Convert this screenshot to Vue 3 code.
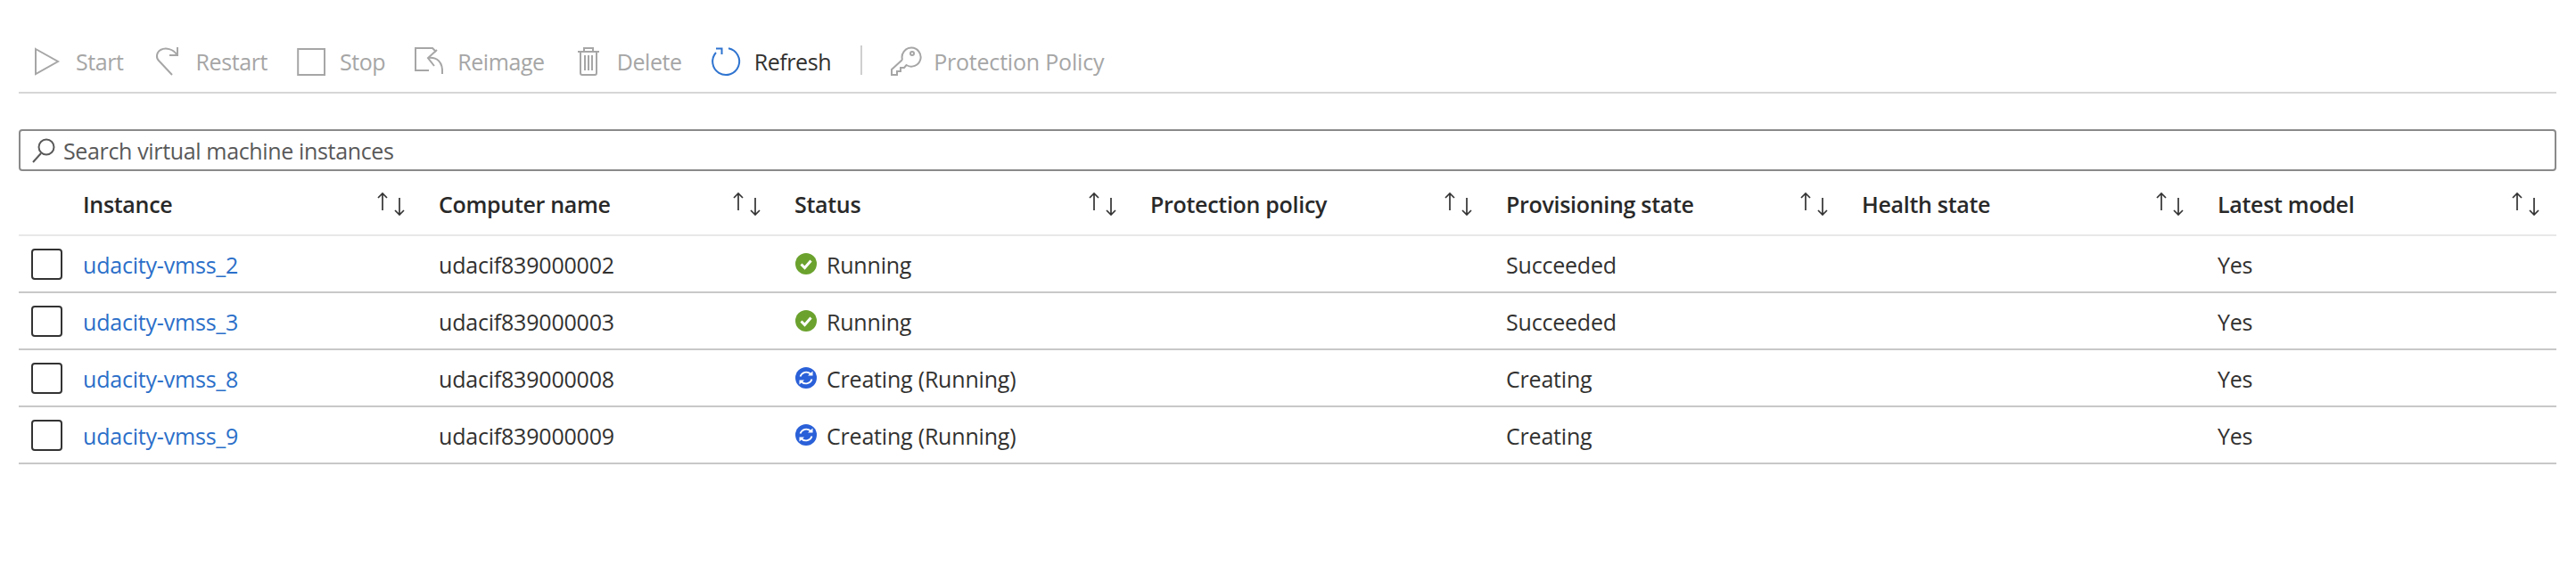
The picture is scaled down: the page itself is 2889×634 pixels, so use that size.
<template>
  <main class="page">
    <div class="toolbar">
      <button v-for="item in toolbarItems" :key="item.label" class="tool" :class="{ active: item.active, spaced: item.spaced }">
        <svg class="tool-icon" viewBox="0 0 32 32" fill="none" stroke="currentColor" stroke-width="2">
          <path v-for="d in item.paths" :key="d" :d="d" />
        </svg>
        <span>{{ item.label }}</span>
      </button>
    </div>

    <div class="search">
      <svg class="search-icon" viewBox="0 0 26 28" fill="none" stroke="#595959" stroke-width="2">
        <circle cx="16" cy="10" r="8.5" />
        <path d="M10 17 L1 27" />
      </svg>
      <span>Search virtual machine instances</span>
    </div>

    <div class="table">
      <div class="row head">
        <div></div>
        <div v-for="col in columns" :key="col" class="head-cell">
          <span>{{ col }}</span>
          <svg class="sort" viewBox="0 0 32 26" fill="none" stroke="#333" stroke-width="1.7">
            <path d="M6 20 V1 M1 6 L6 1 L11 6" />
            <path d="M25 6 V25 M20 20 L25 25 L30 20" />
          </svg>
        </div>
      </div>

      <div v-for="vm in instances" :key="vm.name" class="row">
        <div class="check-cell"><span class="checkbox"></span></div>
        <a class="cell link">{{ vm.name }}</a>
        <div class="cell">{{ vm.computer }}</div>
        <div class="status">
          <svg v-if="vm.creating" class="status-icon" viewBox="0 0 24 24">
            <circle cx="12" cy="12" r="12" fill="#2a60d8" />
            <path d="M5.5 10.5 A7 7 0 0 1 17 7.5 M18.5 13.5 A7 7 0 0 1 7 16.5" fill="none" stroke="#fff" stroke-width="1.8" />
            <path d="M14 9.5 H19.5 V4.5 Z M10 14.5 H4.5 V19.5 Z" fill="#fff" />
          </svg>
          <svg v-else class="status-icon" viewBox="0 0 24 24">
            <circle cx="12" cy="12" r="12" fill="#6ba22e" />
            <path d="M6.5 12.5 L10.5 16.5 L17.5 8.5" fill="none" stroke="#fff" stroke-width="3" />
          </svg>
          <span class="cell">{{ vm.status }}</span>
        </div>
        <div></div>
        <div class="cell">{{ vm.provisioning }}</div>
        <div></div>
        <div class="cell">Yes</div>
      </div>
    </div>
  </main>
</template>

<script setup>
const toolbarItems = [
  { label: 'Start', paths: ['M3 2 L28 16 L3 30 Z'] },
  { label: 'Restart', paths: ['M27 0 V9 H18', 'M26 8 C22 2 14 0 8 3 C3 6 3 12 6 15 L21 31'] },
  { label: 'Stop', paths: ['M1.2 2 H31 V31 H1.2 Z'] },
  { label: 'Reimage', paths: ['M16 26 H1 V1 H20 L24 5', 'M25 3 L15 12 L22 21', 'M15 12 C25 11 32 16 31 30'] },
  { label: 'Delete', paths: ['M4 5 H28', 'M7 5 V29 Q7 31 9 31 H23 Q25 31 25 29 V5', 'M11 5 V1 H21 V5', 'M12 9 V26', 'M16 9 V26', 'M20 9 V26'] },
  { label: 'Refresh', active: true, paths: ['M19 1.3 A15 15 0 1 1 5 6', 'M5 1.5 H11.5 V8'] },
  { label: 'Protection Policy', spaced: true, paths: ['M13 14 L1 25 V31 H7 V27 H11 V23 H15 L17.5 20 A10.5 10.5 0 1 0 13 14', 'M24 5 A2 2 0 1 0 24 9 A2 2 0 1 0 24 5'] }
]

const columns = ['Instance', 'Computer name', 'Status', 'Protection policy', 'Provisioning state', 'Health state', 'Latest model']

const instances = [
  { name: 'udacity-vmss_2', computer: 'udacif839000002', status: 'Running', provisioning: 'Succeeded' },
  { name: 'udacity-vmss_3', computer: 'udacif839000003', status: 'Running', provisioning: 'Succeeded' },
  { name: 'udacity-vmss_8', computer: 'udacif839000008', status: 'Creating (Running)', provisioning: 'Creating', creating: true },
  { name: 'udacity-vmss_9', computer: 'udacif839000009', status: 'Creating (Running)', provisioning: 'Creating', creating: true }
]
</script>

<style>
html, body {
  background: #fff;
}
</style>

<style scoped>
.page {
  width: 2846px;
  margin-left: 21px;
  font-family: "Open Sans", sans-serif;
  font-size: 25px;
  letter-spacing: -0.2px;
  color: #323130;
}

.toolbar {
  display: flex;
  align-items: center;
  gap: 33px;
  height: 69px;
  padding-top: 34px;
  padding-left: 16px;
  border-bottom: 2px solid #d6d6d6;
  letter-spacing: -0.42px;
}

.tool {
  display: flex;
  align-items: center;
  gap: 16px;
  padding: 0;
  border: none;
  background: none;
  font: inherit;
  letter-spacing: inherit;
  color: #a6a6a6;
}

.tool.active {
  color: #323130;
}

.tool.active .tool-icon {
  color: #2f74d0;
}

.tool.spaced {
  position: relative;
  margin-left: 34px;
  letter-spacing: -0.2px;
}

.tool.spaced::before {
  content: "";
  position: absolute;
  left: -34px;
  top: -1px;
  width: 2px;
  height: 33px;
  background: #cfcfcf;
}

.tool-icon {
  width: 32px;
  height: 32px;
  overflow: visible;
  color: #a6a6a6;
}

.search {
  display: flex;
  align-items: center;
  gap: 9px;
  height: 47px;
  margin-top: 40px;
  padding-left: 13px;
  border: 2px solid #8a8a8a;
  border-radius: 4px;
  box-sizing: border-box;
  color: #595959;
  letter-spacing: -0.35px;
}

.search-icon {
  width: 26px;
  height: 28px;
}

.table {
  margin-top: 8px;
}

.row {
  display: grid;
  grid-template-columns: 72px repeat(6, 399px) 380px;
  align-items: center;
  height: 64px;
  border-bottom: 2px solid #c8c8c8;
  box-sizing: border-box;
}

.row.head {
  height: 65px;
  padding-bottom: 6px;
  border-bottom-color: #e8e8e8;
  font-weight: 600;
  color: #292929;
  letter-spacing: -0.3px;
}

.head-cell {
  display: flex;
  align-items: center;
  justify-content: space-between;
  width: 362px;
}

.sort {
  width: 32px;
  height: 26px;
}

.cell {
  padding-top: 2px;
}

.check-cell {
  display: flex;
  padding-left: 14px;
}

.checkbox {
  width: 35px;
  height: 35px;
  border: 2px solid #333;
  border-radius: 4px;
  box-sizing: border-box;
}

.link {
  color: #2b6fc9;
}

.status {
  display: flex;
  align-items: center;
  gap: 11px;
  padding-left: 1px;
}

.status-icon {
  width: 24px;
  height: 24px;
  flex: none;
}
</style>
